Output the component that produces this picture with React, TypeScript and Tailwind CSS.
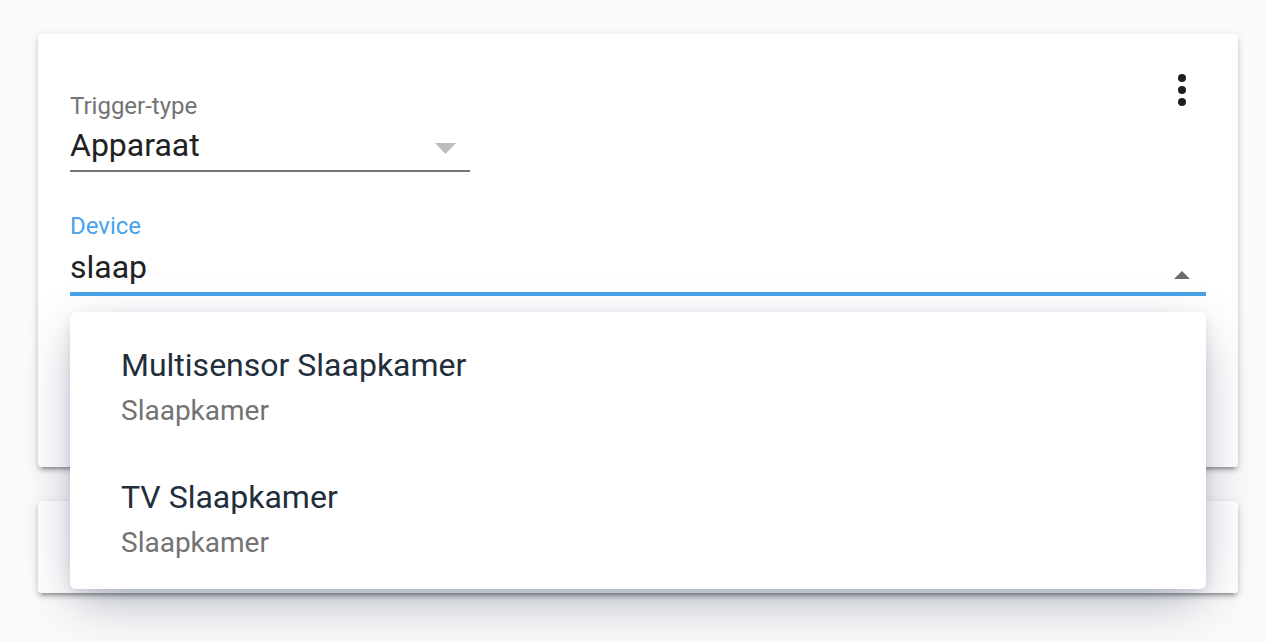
import React from "react";

const cardShadow =
  "shadow-[0_4px_4px_0_rgba(0,0,0,0.14),0_2px_10px_0_rgba(0,0,0,0.12),0_6px_2px_-4px_rgba(0,0,0,0.2)]";

function Kebab() {
  return (
    <svg width="10" height="34" viewBox="0 0 10 34" className="block">
      <circle cx="5" cy="5" r="4" fill="#212121" />
      <circle cx="5" cy="17" r="4" fill="#212121" />
      <circle cx="5" cy="29" r="4" fill="#212121" />
    </svg>
  );
}

export default function App() {
  return (
    <div
      className="relative h-[642px] w-[1266px] overflow-hidden bg-[#fafafa] pl-[38px] pr-[28px] pt-[34px]"
      style={{ fontFamily: "Roboto, 'Noto Sans', sans-serif" }}
    >
      {/* Card 1 */}
      <div className={`relative h-[433px] rounded-[4px] bg-white px-[32px] pt-[58px] ${cardShadow}`}>
        <div className="absolute right-[51px] top-[39px]">
          <Kebab />
        </div>

        {/* Trigger-type */}
        <div className="w-[400px]">
          <div className="text-[24px] leading-[28px] text-[#737373]">Trigger-type</div>
          <div className="mt-[5px] flex items-start justify-between border-b-2 border-[#757575] pb-[5px]">
            <div className="text-[32px] leading-[40px] text-[#212121]">Apparaat</div>
            <svg width="21" height="11" viewBox="0 0 21 11" className="mr-[14px] mt-[18px] block">
              <polygon points="0,0 21,0 10.5,11" fill="#bdbdbd" />
            </svg>
          </div>
        </div>

        {/* Device */}
        <div className="mt-[40px]">
          <div className="text-[24px] leading-[28px] text-[#48a3e8]">Device</div>
          <div className="mt-[7px] flex items-start justify-between border-b-4 border-[#48a3e8] pb-[5px]">
            <div className="text-[32px] leading-[40px] text-[#212121]">slaap</div>
            <svg width="16" height="8" viewBox="0 0 16 8" className="mr-[16px] mt-[24px] block">
              <polygon points="0,8 16,8 8,0" fill="#6b6b6b" />
            </svg>
          </div>
        </div>
      </div>

      {/* Card 2 */}
      <div className={`mt-[34px] h-[92px] rounded-[4px] bg-white ${cardShadow}`} />

      {/* Dropdown overlay */}
      <div className="absolute left-[70px] top-[312px] w-[1136px] rounded-[6px] bg-white pb-[5px] pt-[8px] shadow-[0_4px_12px_-2px_rgba(28,50,90,0.16),0_16px_48px_-8px_rgba(28,45,80,0.38)]">
        {[
          { title: "Multisensor Slaapkamer", sub: "Slaapkamer" },
          { title: "TV Slaapkamer", sub: "Slaapkamer" },
        ].map((it) => (
          <div key={it.title} className="flex h-[132px] flex-col justify-center pl-[51px]">
            <div className="text-[32px] leading-[48px] text-[#232e3c]">{it.title}</div>
            <div className="mt-[2px] text-[28px] leading-[40px] text-[#737373]">{it.sub}</div>
          </div>
        ))}
      </div>
    </div>
  );
}
